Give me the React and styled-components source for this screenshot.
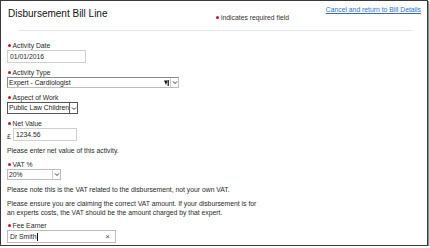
import React from "react";
import styled, { createGlobalStyle } from "styled-components";

const Global = createGlobalStyle`
  html, body { margin: 0; padding: 0; background: #fff; }
  body { font-family: "Liberation Sans", Arial, sans-serif; }
`;

const Frame = styled.div`
  box-sizing: border-box;
  width: 428px;
  height: 246px;
  border: 1px solid #3a3a3a;
  box-shadow: 1px 1px 0 #8a8a8a, 2px 2px 0 #d6d6d6;
  overflow: hidden;
  padding: 0 0 0 6px;
  color: #1e1e1e;
  font-size: 6.8px;
  line-height: 9px;
`;

const Header = styled.div`
  display: grid;
  grid-template-columns: 209px 1fr auto;
  align-items: start;
  height: 29px;
  padding-right: 6px;
`;

const Title = styled.h1`
  margin: 7px 0 0 1px;
  font-size: 10px;
  font-weight: normal;
  line-height: 12px;
  color: #111;
`;

const Legend = styled.div`
  margin-top: 11.5px;
  display: flex;
  align-items: center;
  gap: 2px;
  color: #333;
`;

const CancelLink = styled.a`
  margin-top: 3.5px;
  color: #2f6fc7;
  text-decoration: underline;
  cursor: pointer;
`;

const Divider = styled.div`
  height: 1px;
  background: #e4e9ed;
  margin: 0 15px 0 11px;
`;

const Form = styled.div`
  display: flex;
  flex-direction: column;
  gap: 5px;
  padding-top: 10px;
`;

const Field = styled.div`
  display: flex;
  flex-direction: column;
  align-items: flex-start;
`;

const Dot = styled.span`
  display: inline-block;
  width: 3px;
  height: 3px;
  border-radius: 50%;
  background: #c8102e;
  flex: none;
`;

const Label = styled.div`
  display: flex;
  align-items: center;
  gap: 1.5px;
  height: 9px;
  padding-left: 1px;
  color: #2a2a2a;
`;

const TextInput = styled.input`
  box-sizing: border-box;
  width: ${(p) => p.$w}px;
  height: 13px;
  margin: 0;
  padding: 0 2px;
  border: 1px solid #cfcfcf;
  font-family: "Liberation Sans", Arial, sans-serif;
  font-size: 6.8px;
  color: #1e1e1e;
  background: #fff;
  outline: none;
`;

const MoneyRow = styled.div`
  display: flex;
  align-items: center;
  gap: 1px;
`;

const Currency = styled.span`
  width: 5px;
  padding-top: 3px;
  color: #333;
`;

const Select = styled.div`
  box-sizing: border-box;
  width: ${(p) => p.$w}px;
  height: ${(p) => p.$h || 11}px;
  display: flex;
  align-items: stretch;
  border: 1px solid ${(p) => (p.$dark ? "#555" : "#bdbdbd")};
  border-top-color: ${(p) => (p.$inset ? "#8a8a8a" : p.$dark ? "#555" : "#bdbdbd")};
  border-left-color: ${(p) => (p.$inset ? "#8a8a8a" : p.$dark ? "#555" : "#bdbdbd")};
  background: #fff;
`;

const SelectText = styled.span`
  flex: 1;
  padding-left: 1px;
  line-height: 9px;
  white-space: nowrap;
  overflow: hidden;
  color: #1a1a1a;
`;

const ArrowBox = styled.span`
  box-sizing: border-box;
  width: 8px;
  display: flex;
  align-items: center;
  justify-content: center;
  border-left: 1px solid ${(p) => (p.$dark ? "#666" : "#cfcfcf")};
  background: #fff;
`;

const Marker = styled.span`
  display: flex;
  align-items: center;
  margin-right: 1px;
`;

const Help = styled.p`
  margin: 0;
  color: #2a2a2a;
  width: 258px;
`;

const ClearInput = styled.div`
  box-sizing: border-box;
  width: 109px;
  height: 13px;
  display: flex;
  align-items: center;
  border: 1px solid #bdbdbd;
  padding: 0 2px;
  color: #1a1a1a;
`;

const Caret = styled.span`
  display: inline-block;
  width: 1px;
  height: 8px;
  background: #111;
  margin-left: 0.5px;
`;

const Clear = styled.span`
  margin-left: auto;
  margin-right: 3px;
  font-size: 8px;
  color: #444;
`;

const FeeField = styled(Field)`
  margin-top: -1px;
`;

const Chevron = () => (
  <svg width="6" height="5" viewBox="0 0 6 5">
    <polyline points="1,1.5 3,3.5 5,1.5" fill="none" stroke="#333" strokeWidth="1" />
  </svg>
);

const Funnel = () => (
  <svg width="5" height="6" viewBox="0 0 5 6">
    <polygon points="0,0.5 3.5,0.5 2,5" fill="#111" />
    <rect x="3.6" y="0" width="1.2" height="6" fill="#111" />
  </svg>
);

const Req = ({ children }) => (
  <Label>
    <Dot />
    {children}
  </Label>
);

export default function App() {
  return (
    <>
      <Global />
      <Frame>
        <Header>
          <Title>Disbursement Bill Line</Title>
          <Legend>
            <Dot />
            indicates required field
          </Legend>
          <CancelLink>Cancel and return to Bill Details</CancelLink>
        </Header>
        <Divider />
        <Form>
          <Field>
            <Req>Activity Date</Req>
            <TextInput $w={79} defaultValue="01/01/2016" readOnly />
          </Field>
          <Field>
            <Req>Activity Type</Req>
            <Select $w={172} $inset>
              <SelectText>Expert - Cardiologist</SelectText>
              <Marker>
                <Funnel />
              </Marker>
              <ArrowBox>
                <Chevron />
              </ArrowBox>
            </Select>
          </Field>
          <Field>
            <Req>Aspect of Work</Req>
            <Select $w={71} $h={12} $dark>
              <SelectText>Public Law Children</SelectText>
              <ArrowBox $dark>
                <Chevron />
              </ArrowBox>
            </Select>
          </Field>
          <Field>
            <Req>Net Value</Req>
            <MoneyRow>
              <Currency>£</Currency>
              <TextInput $w={64} defaultValue="1234.56" readOnly />
            </MoneyRow>
          </Field>
          <Help>Please enter net value of this activity.</Help>
          <Field>
            <Req>VAT %</Req>
            <Select $w={54}>
              <SelectText>20%</SelectText>
              <ArrowBox>
                <Chevron />
              </ArrowBox>
            </Select>
          </Field>
          <Help>Please note this is the VAT related to the disbursement, not your own VAT.</Help>
          <Help>
            Please ensure you are claiming the correct VAT amount. If your disbursement is for
            an experts costs, the VAT should be the amount charged by that expert.
          </Help>
          <FeeField>
            <Req>Fee Earner</Req>
            <ClearInput>
              Dr Smith
              <Caret />
              <Clear>×</Clear>
            </ClearInput>
          </FeeField>
        </Form>
      </Frame>
    </>
  );
}
